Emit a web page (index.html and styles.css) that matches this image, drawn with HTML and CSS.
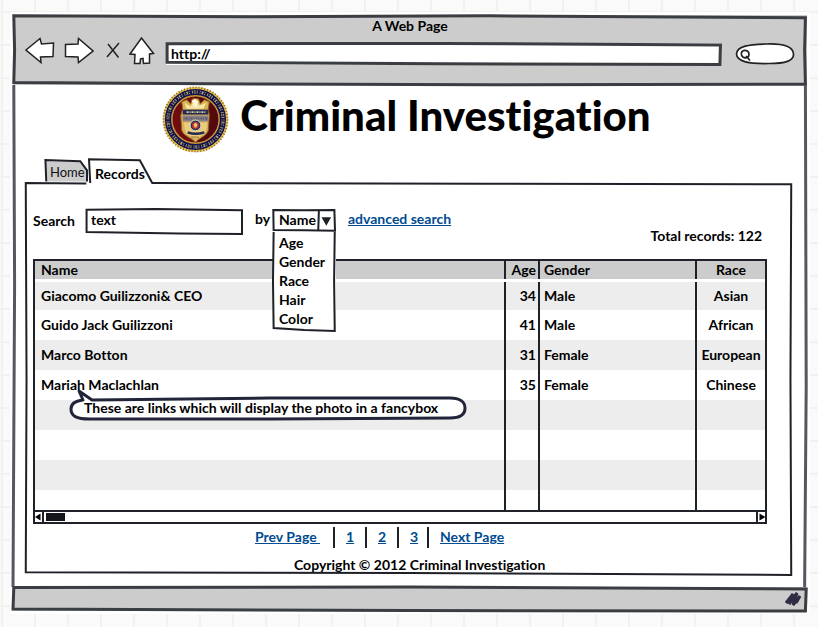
FILE: index.html
```html
<!DOCTYPE html>
<html lang="en">
<head>
<meta charset="utf-8">
<meta name="viewport" content="width=device-width, initial-scale=1">
<title>A Web Page</title>
<link rel="stylesheet" href="styles.css">
</head>
<body>
<div class="browser">
  <header class="toolbar">
    <svg class="sketch sketch-thick" viewBox="0 0 100 100" preserveAspectRatio="none" aria-hidden="true"><path d="M0.1 1 L30 2.4 L60 1.2 L99.8 4 L99.7 50 L99.8 99 L60 99.6 L30 98.4 L0.1 96.5 L0.200 50 Z"/></svg>
    <div class="window-title">A Web Page</div>
    <div class="tools">
      <button class="tool" type="button" aria-label="Back"><svg width="30" height="28" viewBox="0 0 30 28"><path stroke-width="1.500" d="M1 13 L15 1.500 L16.500 7 L28.500 6 L28 19.500 L15.500 20 L16 25.500 Z"/></svg></button>
      <button class="tool tool-forward" type="button" aria-label="Forward"><svg width="30" height="28" viewBox="0 0 30 28"><path stroke-width="1.500" d="M1.500 7.500 L14 7 L14.500 1.500 L29 14 L14.500 25.500 L14 20 L1.500 19.500 Z"/></svg></button>
      <button class="tool tool-stop" type="button" aria-label="Stop"><svg width="14" height="28" viewBox="0 0 14 28"><path stroke-width="1.500" d="M2 7 L12.500 20.500 M13 6 L1 20"/></svg></button>
      <button class="tool tool-home" type="button" aria-label="Home page"><svg width="26" height="28" viewBox="0 0 26 28"><path stroke-width="1.500" d="M1 17 L12.500 1 L24.500 16.500 L20.500 17 L20.500 26 L14.500 26.500 L14 21.500 L11.500 22 L11 26.500 L5.500 26.500 L6 17.500 Z"/></svg></button>
      <div class="address">
        <svg class="sketch sketch-thick" viewBox="0 0 100 100" preserveAspectRatio="none" aria-hidden="true"><path d="M0.200 3 L50 2 L99.900 9 L99.800 98 L50 94 L0.200 88 Z"/></svg>
        <input class="address-input" type="text" value="http://" aria-label="Address">
      </div>
      <div class="web-search">
        <svg width="60" height="24" viewBox="0 0 60 24" aria-hidden="true"><path stroke-width="1.700" class="fill-white" d="M1.500 11 C2 3 14 1.500 32 1 C50 0.500 58 4 58.500 11 C59 18 50 20.500 34 20.500 C14 21 2 19 1.500 11 Z"/><path stroke-width="1.700" d="M6.500 12 C5 6 14 6 14 11 C14 16 8 16 6.500 12 M11 13 L15 17.500"/></svg>
        <input class="web-search-input" type="search" aria-label="Web search">
      </div>
    </div>
  </header>

  <main class="page">
    <svg class="sketch sketch-side" viewBox="0 0 100 100" preserveAspectRatio="none" aria-hidden="true"><path d="M0.1 0 L0.200 40 L0 100 M99.8 0 L99.9 60 L99.7 100"/></svg>
    <div class="masthead">
      <svg class="seal" viewBox="0 0 68 68" role="img" aria-label="Seal">
        <circle cx="34" cy="34" r="31.500" fill="#12134f"/>
        <circle cx="34" cy="34" r="32" fill="none" stroke="#e8c34d" stroke-width="2"/>
        <circle cx="34" cy="34" r="32.500" fill="none" stroke="#8c641c" stroke-width="2" stroke-dasharray="1 2"/>
        <circle cx="34" cy="34" r="28" fill="none" stroke="#b5a768" stroke-width="3" stroke-dasharray="1 1 2 1 1 2"/>
        <circle cx="34" cy="34" r="28" fill="none" stroke="#12134f" stroke-width="1" stroke-dasharray="3 2"/>
        <circle cx="34" cy="34" r="24" fill="#6e0c10" stroke="#c99a35" stroke-width="1.500"/>
        <path d="M34 11 A23 23 0 0 1 34 57 Z" fill="#54090f"/>
        <path d="M20 16 L25 14 L29 18 L31 13 L37 13 L39 18 L43 14 L48 16 L47 23 L48 30 L47 45 C45 51 39 52 34 57 C29 52 22 51 20 45 L19 30 L21 23 Z" fill="#d9b157" stroke="#8c641c"/>
        <path d="M23 17 L29 21 L32 16 L35 15 L38 20 L45 17 L42 23 L25 23 Z" fill="#f6e6aa"/>
        <path d="M30 15 L34 13 L37 16 L34 22 Z" fill="#fff6d5"/>
        <rect x="21" y="24" width="26" height="5" fill="#252b52"/>
        <path d="M25 26.500 H44" stroke="#ddd3a0" stroke-width="2" stroke-dasharray="2 1 1 1"/>
        <rect x="21" y="30" width="26" height="6" fill="#89818a"/>
        <path d="M22 33 H46" stroke="#5a5a6c" stroke-width="2" stroke-dasharray="1 1 2 1"/>
        <path d="M22 37 H46 L44 48 L34 54 L24 48 Z" fill="#e9cc7d"/>
        <circle cx="34" cy="40" r="5.500" fill="#273566" stroke="#f5e3a8"/>
        <circle cx="34" cy="40" r="3.500" fill="#c5342a"/>
        <path d="M32 39 L34 37 L36 39 L35 42 L33 42 Z" fill="#e9c06d"/>
        <path d="M26 47 Q34 50 43 47" fill="none" stroke="#252b52" stroke-width="2.500"/>
        <path d="M30 52 H38" stroke="#8c641c" stroke-width="2" stroke-dasharray="1 1"/>
      </svg>
      <h1 class="site-title">Criminal Investigation</h1>
    </div>

    <nav class="tabs" aria-label="Sections">
      <a class="tab" href="#home"><svg class="sketch sketch-tab" viewBox="0 0 100 100" preserveAspectRatio="none" aria-hidden="true"><path class="fill-grey" d="M3 93 L1 0 L84 5 L100 45 L100 93" /></svg><span>Home</span></a>
      <a class="tab tab-current" href="#records" aria-current="page"><svg class="sketch sketch-current" viewBox="0 0 100 100" preserveAspectRatio="none" aria-hidden="true"><path class="fill-white" d="M2 100 L0 1 L82 5 L102 100"/></svg><span>Records</span></a>
    </nav>

    <section class="panel">
      <svg class="sketch" viewBox="0 0 100 100" preserveAspectRatio="none" aria-hidden="true"><path d="M8 0.100 L0.100 0 L0.200 50 L0.100 99.300 L50 99.500 L99.900 100 L99.800 50 L99.900 0.300 L60 0.200 L16.500 0"/></svg>
      <form class="search">
        <label class="search-label" for="query">Search</label>
        <div class="query">
          <svg class="sketch" viewBox="0 0 100 100" preserveAspectRatio="none" aria-hidden="true"><path class="fill-white" d="M1 3 L45 0 L100 5 L100 100 L60 98 L1 92 Z"/></svg>
          <input class="query-input" id="query" type="text" value="text">
        </div>
        <label class="by-label" for="field">by</label>
        <div class="combo">
          <svg class="sketch" viewBox="0 0 100 100" preserveAspectRatio="none" aria-hidden="true"><path class="fill-white" d="M0.500 5 L50 6 L99 5 L100 104 L50 101 L1 100 Z M74 6 L73 102"/><path class="fill-ink" d="M81 44 L91 44 L86 70 Z"/></svg>
          <select class="combo-select" id="field"><option>Name</option></select>
          <ul class="menu">
            <li>Age</li><li>Gender</li><li>Race</li><li>Hair</li><li>Color</li>
            <li class="menu-frame"><svg class="sketch" viewBox="0 0 100 100" preserveAspectRatio="none" aria-hidden="true"><path d="M1 0 L0 50 L1 98 L50 100 L98 101 L97 50 L98 0"/></svg></li>
          </ul>
        </div>
        <a class="link advanced" href="#advanced">advanced search</a>
        <p class="total">Total records: 122</p>
      </form>

      <div class="grid">
        <table class="records">
          <colgroup><col><col class="col-age"><col class="col-gender"><col class="col-race"></colgroup>
          <thead><tr><th>Name</th><th class="age">Age</th><th>Gender</th><th class="race">Race</th></tr></thead>
          <tbody>
            <tr><td>Giacomo Guilizzoni&amp; CEO</td><td class="age">34</td><td>Male</td><td class="race">Asian</td></tr>
            <tr><td>Guido Jack Guilizzoni</td><td class="age">41</td><td>Male</td><td class="race">African</td></tr>
            <tr><td>Marco Botton</td><td class="age">31</td><td>Female</td><td class="race">European</td></tr>
            <tr><td class="noted">Mariah Maclachlan
              <div class="callout"><svg class="callout-shape" viewBox="0 0 396 32" preserveAspectRatio="none" aria-hidden="true"><path d="M22 11 L9 2 L13 11 C4 12 1 16 1 20 C1 27 6 30 20 30 L200 30 L380 29 C391 29 395 25 395 19 C395 13 390 9 380 9 L200 9 Z"/></svg><span>These are links which will display the photo in a fancybox</span></div>
            </td><td class="age">35</td><td>Female</td><td class="race">Chinese</td></tr>
            <tr><td></td><td></td><td></td><td></td></tr>
            <tr><td></td><td></td><td></td><td></td></tr>
            <tr><td></td><td></td><td></td><td></td></tr>
            <tr class="last"><td></td><td></td><td></td><td></td></tr>
          </tbody>
        </table>
        <div class="scrollbar">
          <button class="scroll-button" type="button" aria-label="Scroll left"><svg width="8" height="8" viewBox="0 0 8 8"><path d="M6.500 0.500 L1 4 L6.500 7.500 Z"/></svg></button>
          <div class="scroll-track"><div class="scroll-thumb"></div></div>
          <button class="scroll-button scroll-right" type="button" aria-label="Scroll right"><svg width="8" height="8" viewBox="0 0 8 8"><path d="M1.500 0.500 L7.500 4 L1.500 7.500 Z"/></svg></button>
        </div>
      </div>

      <nav class="pager" aria-label="Pages">
        <a class="link prev" href="#prev">Prev Page&nbsp;</a>
        <a class="link number" href="#1">1</a>
        <a class="link number" href="#2">2</a>
        <a class="link number" href="#3">3</a>
        <a class="link next" href="#next">Next Page</a>
      </nav>
      <p class="copyright">Copyright © 2012 Criminal Investigation</p>
    </section>
  </main>

  <footer class="status">
    <svg class="sketch sketch-thick" viewBox="0 0 100 100" preserveAspectRatio="none" aria-hidden="true"><path d="M0.100 2 L50 0 L99.900 8 L99.800 100 L50 98 L0 92 Z"/></svg>
    <svg class="grip" width="18" height="16" viewBox="0 0 18 16" aria-hidden="true"><path d="M2 12 L9 3 L5 13 L13 2 L9 14 L16 5 L12 12"/></svg>
  </footer>
</div>
</body>
</html>
```
FILE: styles.css
```css
* { box-sizing: border-box; }

body {
  margin: 0;
  padding: 15px 11px 17px 13px;
  color: #000;
  font: bold 14px/18px Lato, "Open Sans", sans-serif;
  font-variant-ligatures: none;
  background-color: #fafafa;
  background-image:
    linear-gradient(90deg, #f1f1f1 2px, transparent 2px),
    linear-gradient(#f1f1f1 2px, transparent 2px);
  background-size: 33px 33px;
  background-position: 1px 11px;
}

button, input, select { font: inherit; color: inherit; }
button { padding: 0; border: 0; background: none; }
p, ul, h1 { margin: 0; padding: 0; }
svg { display: block; }

.browser {
  background: #fff;
  box-shadow: 0 0 0 3px #fff;
}

/* Hand-drawn outlines stretched over their parent box */
.sketch {
  position: absolute;
  inset: 0;
  width: 100%;
  height: 100%;
  overflow: visible;
  pointer-events: none;
  fill: none;
  stroke: #1f2128;
  stroke-width: 2px;
}
.sketch path { vector-effect: non-scaling-stroke; }
.sketch-thick { stroke: #3a3d41; stroke-width: 3px; }
.sketch-side { stroke: #55585e; stroke-width: 3px; }
.fill-white { fill: #fff; }
.fill-grey { fill: #ccc; }
.fill-ink { fill: #1f2128; }

.toolbar {
  position: relative;
  height: 70px;
  padding-top: 2px;
  background: #ccc;
}
.window-title { text-align: center; }
.tools {
  display: flex;
  align-items: center;
  padding: 0 12px 0 12px;
}
.tool svg, .web-search svg {
  fill: none;
  stroke: #222;
}
.tool svg path { fill: #fff; }
.tool-forward { margin-left: 9px; }
.tool-stop { margin-left: 12px; }
.tool-stop svg path { fill: none; }
.tool-home { margin-left: 9px; }
.address {
  position: relative;
  flex: 1;
  height: 22px;
  margin: 6px 0 0 11px;
  background: #fff;
}
.address-input {
  position: relative;
  width: 100%;
  height: 20px;
  padding: 0 5px;
  border: 0;
  background: none;
}
.web-search {
  position: relative;
  margin: 8px 0 0 14px;
}
.web-search-input {
  position: absolute;
  inset: 4px 8px 4px 18px;
  width: 34px;
  height: 14px;
  padding: 0;
  border: 0;
  appearance: none;
  background: none;
}

.page {
  position: relative;
  padding: 1px 15px 12px 12px;
}
.masthead {
  display: flex;
  justify-content: center;
  gap: 11px;
  height: 72px;
  padding-right: 4px;
}
.seal { width: 67px; height: 67px; }
.site-title {
  font-size: 42px;
  font-weight: 900;
  line-height: 58px;
}

.tabs {
  display: flex;
  align-items: flex-end;
  height: 25px;
  padding-left: 20px;
}
.tab {
  position: relative;
  width: 42px;
  height: 23px;
  padding: 3px 0 0 5px;
  color: #111;
  font-size: 13px;
  font-weight: normal;
  text-decoration: none;
}
.tab span { position: relative; }
.tab-current {
  z-index: 1;
  width: 62px;
  height: 24px;
  margin-left: 2px;
  padding: 6px 0 0 6px;
  color: #000;
  font-size: 14px;
  font-weight: bold;
}

.panel {
  position: relative;
  padding: 26px 25px 1px 8px;
}

.search {
  position: relative;
  display: flex;
  align-items: flex-start;
  height: 50px;
}
.search-label { width: 52px; padding-top: 3px; }
.query {
  position: relative;
  width: 157px;
  height: 25px;
}
.query-input {
  position: relative;
  width: 100%;
  height: 21px;
  padding: 0 6px;
  border: 0;
  background: none;
}
.by-label { width: 31px; padding: 1px 0 0 13px; }
.combo {
  position: relative;
  z-index: 2;
  width: 62px;
  height: 21px;
}
.combo-select {
  position: relative;
  width: 100%;
  height: 21px;
  padding: 0 0 0 6px;
  border: 0;
  appearance: none;
  background: none;
}
.menu {
  position: absolute;
  top: 23px;
  left: 0;
  width: 63px;
  padding: 1px 0 2px 6px;
  list-style: none;
  line-height: 19px;
  background: #fff;
}
.menu-frame { line-height: 0; }
.link { color: #004b91; text-decoration: underline; }
.advanced { margin: 1px 0 0 13px; }
.total { margin: 18px 5px 0 auto; }

.grid { border: 2px solid #1f2128; border-bottom: 0; }
.records {
  width: 100%;
  table-layout: fixed;
  border-collapse: collapse;
}
.col-age { width: 34px; }
.col-gender { width: 157px; }
.col-race { width: 69px; }
.records th {
  height: 19px;
  padding: 0 4px 0 6px;
  border-bottom: 3px solid #fff;
  line-height: 16px;
  background: #ccc;
  text-align: left;
}
.records td { height: 30px; padding: 0 4px 0 6px; }
.records tr > * + * { border-left: 2px solid #1f2128; padding-left: 4px; }
.records tbody tr:nth-child(odd) { background: #ededed; }
.records .last td { height: 20px; }
.records .age { padding: 0 2px 0 0; text-align: right; }
.records .race { padding: 0; text-align: center; }
.records .noted { position: relative; }
.callout {
  position: absolute;
  z-index: 1;
  top: 19px;
  left: 35px;
  width: 396px;
  height: 32px;
  padding: 10px 0 0 14px;
  white-space: nowrap;
}
.callout span { position: relative; }
.callout-shape {
  position: absolute;
  inset: 0;
  width: 100%;
  height: 100%;
  overflow: visible;
  fill: #fff;
  stroke: #22243a;
  stroke-width: 3px;
  stroke-linejoin: round;
}

.scrollbar {
  display: flex;
  height: 14px;
  margin: 0 -1px;
  border-top: 2px solid #1f2128;
  border-bottom: 2px solid #1f2128;
}
.scroll-button {
  display: grid;
  place-items: center;
  width: 10px;
  border-right: 2px solid #1f2128;
}
.scroll-right { border-right: 0; border-left: 2px solid #1f2128; }
.scroll-track { flex: 1; padding: 1px 2px; }
.scroll-thumb { width: 19px; height: 8px; background: #14151a; }

.pager {
  display: flex;
  align-items: center;
  height: 22px;
  margin-top: 2px;
  padding-left: 222px;
}
.pager .link { display: block; }
.prev { width: 67px; margin-right: 12px; }
.number, .next { position: relative; }
.number { width: 8px; margin: 0 12px; }
.next { margin-left: 10px; }
.number::before, .next::before {
  content: "";
  position: absolute;
  top: -1px;
  left: -13px;
  width: 2px;
  height: 21px;
  background: #1f2128;
}
.copyright {
  margin-top: 8px;
  padding-left: 261px;
}

.status {
  position: relative;
  height: 24px;
  background: #ccc;
}
.grip {
  margin: 0 5px 0 auto;
  padding-top: 4px;
  width: 18px;
  height: 20px;
  overflow: visible;
  fill: none;
  stroke: #2f2c45;
  stroke-width: 3px;
}
```
